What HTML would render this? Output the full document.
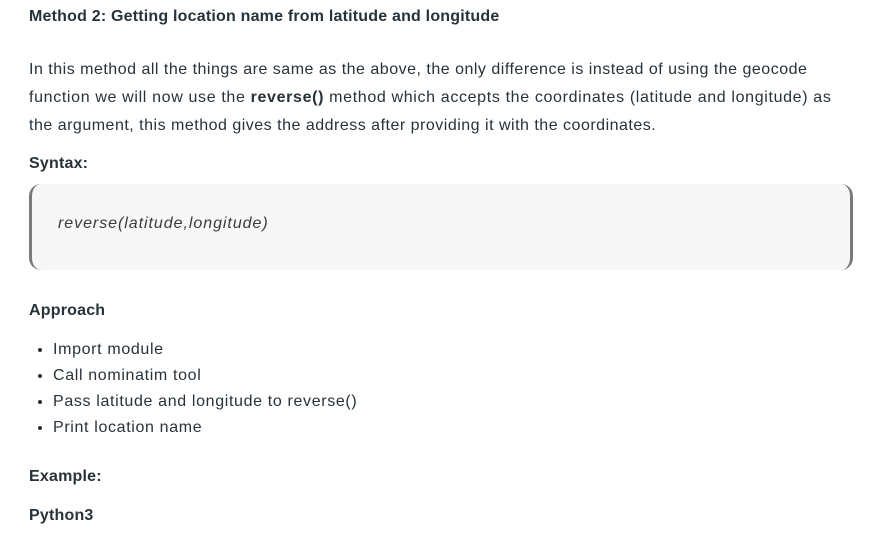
<!DOCTYPE html>
<html><head><meta charset="utf-8"><style>
body{margin:0;width:891px;height:541px;background:#fff;font-family:"Liberation Sans",sans-serif;color:#273239;position:relative;overflow:hidden}
.a{position:absolute;left:29px;white-space:nowrap}
b{font-weight:700}
.h{font-weight:700;font-size:16px;color:#273239;letter-spacing:0.2px}
.p{font-size:16px;line-height:28px;letter-spacing:0.5px}
.box{position:absolute;left:29px;top:184px;width:818px;background:#f7f7f8;border-left:3px solid #7a7a7a;border-right:3px solid #7a7a7a;border-radius:12px;height:86px}
.code{position:absolute;left:58px;top:215px;font-style:italic;font-size:16px;color:#3a3a3a;letter-spacing:0.95px}
ul{position:absolute;left:29px;top:337px;margin:0;padding:0 0 0 24px;font-size:16px;line-height:26px;letter-spacing:0.65px}
li{padding-left:0}
</style></head><body>
<div class="a h" style="top:8px">Method 2: Getting location name from latitude and longitude</div>
<div class="a p" style="top:56px">In this method all the things are same as the above, the only difference is instead of using the geocode<br><span style="letter-spacing:0.65px">function we will now use the <b>reverse()</b> method which accepts the coordinates (latitude and longitude) as</span><br>the argument, this method gives the address after providing it with the coordinates.</div>
<div class="a h" style="top:155px">Syntax:</div>
<div class="box"></div>
<div class="code">reverse(latitude,longitude)</div>
<div class="a h" style="top:302px">Approach</div>
<ul><li>Import module</li><li>Call nominatim tool</li><li>Pass latitude and longitude to reverse()</li><li>Print location name</li></ul>
<div class="a h" style="top:468px">Example:</div>
<div class="a h" style="top:507px">Python3</div>
</body></html>
